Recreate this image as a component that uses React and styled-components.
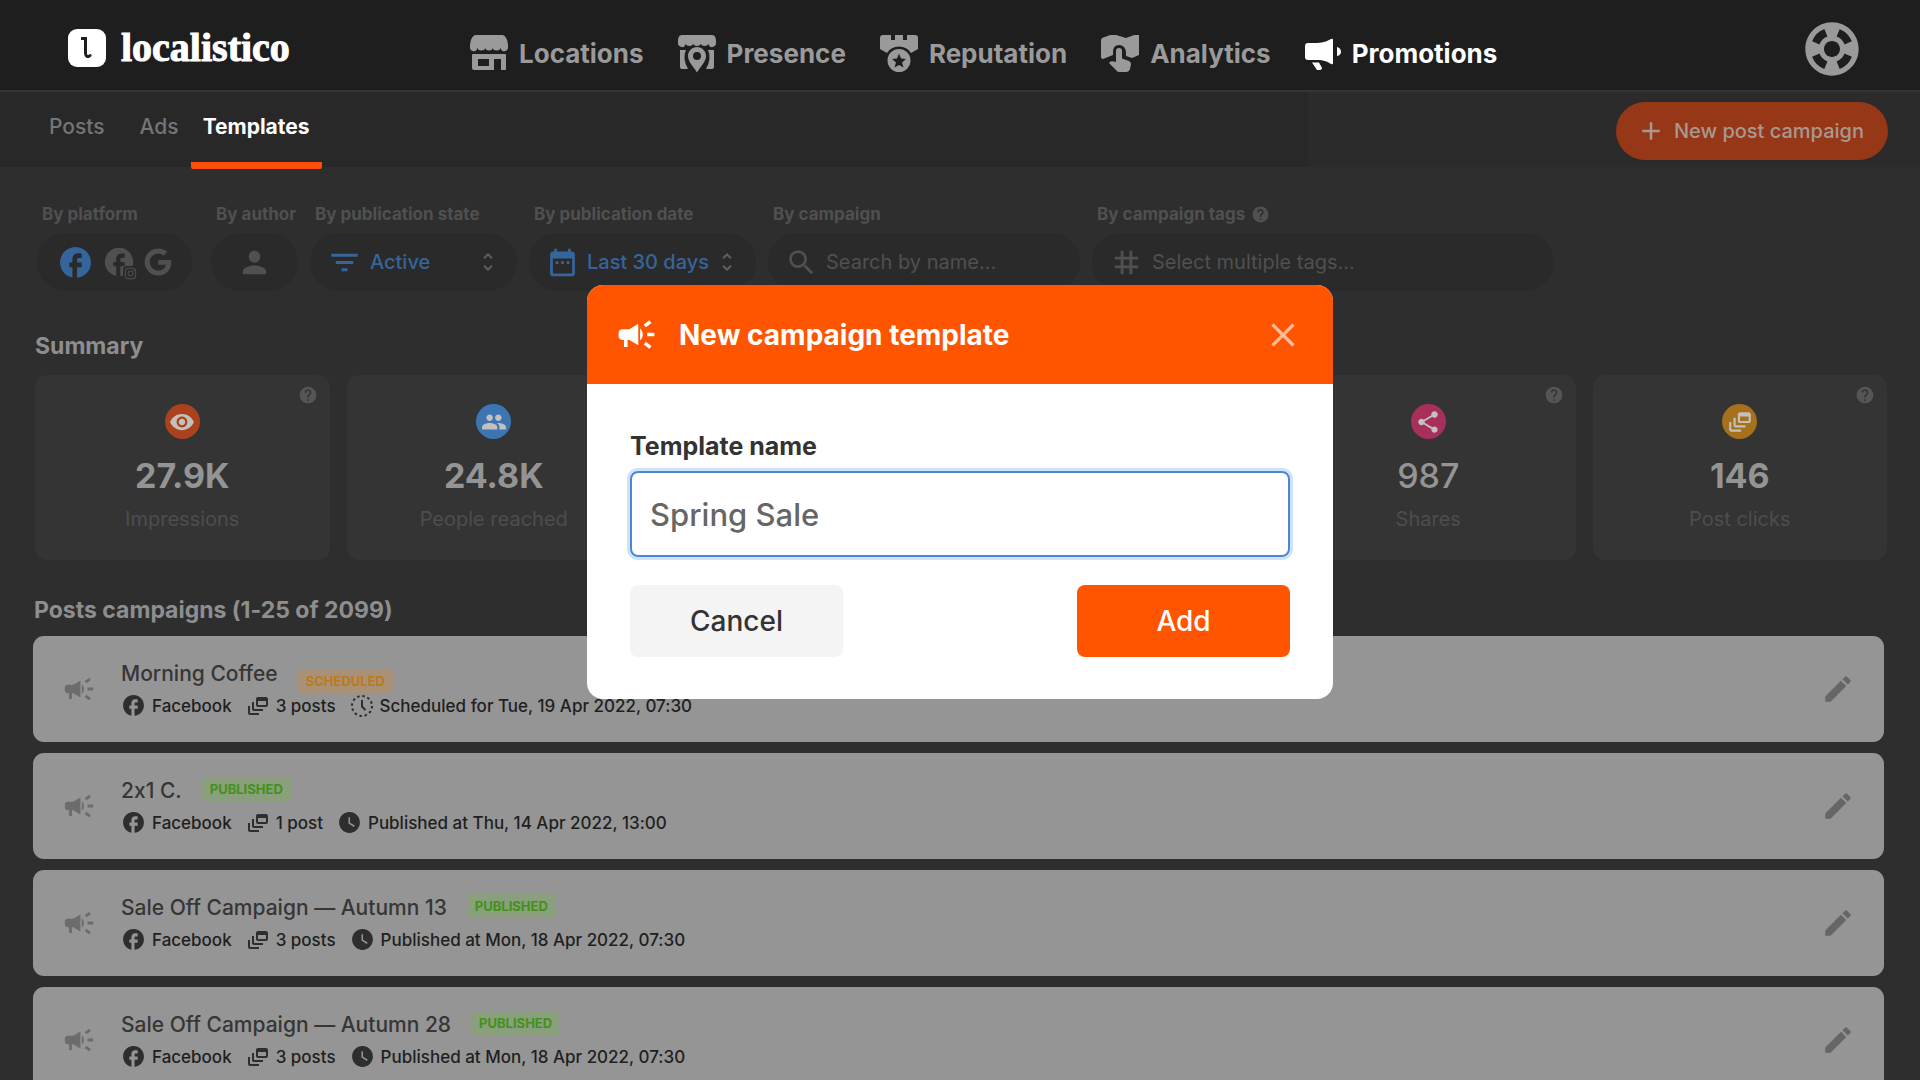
import { useState } from 'react';
import styled, { createGlobalStyle } from 'styled-components';
import {
	MdAdd,
	MdCampaign,
	MdClose,
	MdDateRange,
	MdDynamicFeed,
	MdEdit,
	MdFacebook,
	MdFilterList,
	MdGroup,
	MdHelp,
	MdPerson,
	MdRemoveRedEye,
	MdSearch,
	MdShare,
	MdSupport,
	MdTag,
	MdUnfoldMore,
	MdWatchLater,
} from 'react-icons/md';
import { FaGoogle, FaInstagram } from 'react-icons/fa';

const GlobalStyle = createGlobalStyle`
	* {
		box-sizing: border-box;
	}
	body {
		margin: 0;
		background: #2e2e2e;
		font-family: Inter, 'Liberation Sans', sans-serif;
		font-variant-ligatures: no-contextual;
	}
	h1, h2, h3, p, ul {
		margin: 0;
		padding: 0;
	}
	ul {
		list-style: none;
	}
	a {
		color: inherit;
		text-decoration: none;
	}
	button, input, select {
		border: 0;
		background: none;
		color: inherit;
		font: inherit;
		padding: 0;
	}
	button {
		cursor: pointer;
	}
	svg {
		display: block;
		flex: none;
	}
`;

const Page = styled.div`
	height: 100vh;
	overflow: hidden;
`;

/* ---------- header ---------- */

const Header = styled.header`
	display: grid;
	grid-template-columns: 470px 1fr auto;
	align-items: center;
	height: 92px;
	padding-right: 56px;
	background: #1e1e1e;
	border-bottom: 2px solid #343434;
`;

const Logo = styled.a`
	display: flex;
	align-items: center;
	gap: 15px;
	padding-left: 68px;
	padding-top: 6px;
	color: #fff;
	font: 700 40px/48px 'Liberation Serif', serif;
	-webkit-text-stroke: 1px #fff;
`;

const LogoMark = styled.span`
	display: grid;
	place-items: center;
	width: 38px;
	height: 38px;
	border-radius: 9px;
	background: #fff;
`;

const Nav = styled.nav`
	display: flex;
	gap: 34px;
	padding-top: 18px;
`;

const NavLink = styled.a`
	display: flex;
	align-items: center;
	gap: 11px;
	color: ${({ $active }) => ($active ? '#fff' : '#9a9a9a')};
	font-size: 26px;
	line-height: 32px;
	font-weight: 700;
`;

const HelpButton = styled.button`
	padding-top: 8px;
	color: #9a9a9a;
`;

/* ---------- tabs ---------- */

const SubHeader = styled.div`
	display: flex;
	justify-content: space-between;
	height: 75px;
	padding: 0 32px 0 26px;
	background: linear-gradient(90deg, #282828 1308px, #2b2b2b 1308px);
`;

const Tabs = styled.nav`
	display: flex;
`;

const Tab = styled.a`
	height: 77px;
	padding: 22px 12px 0 ${({ $active }) => ($active ? 12 : 23)}px;
	border-bottom: 7px solid ${({ $active }) => ($active ? '#ff4d0a' : 'transparent')};
	border-radius: 2px;
	color: ${({ $active }) => ($active ? '#fff' : '#757575')};
	font-size: 21px;
	line-height: 26px;
	font-weight: ${({ $active }) => ($active ? 700 : 500)};
`;

const NewPostButton = styled.button`
	display: flex;
	align-items: center;
	gap: 8px;
	height: 58px;
	margin-top: 10px;
	padding: 0 24px 0 20px;
	border-radius: 29px;
	background: #963718;
	color: #a9988f;
	font-size: 20px;
	font-weight: 500;
`;

/* ---------- filters ---------- */

const Filters = styled.form`
	display: flex;
	gap: 12px;
	padding: 36px 37px 0;
`;

const Field = styled.div`
	width: ${({ $width }) => $width}px;
`;

const FieldLabel = styled.label`
	display: flex;
	align-items: center;
	gap: 6px;
	height: 22px;
	margin-bottom: 8px;
	padding-left: 5px;
	color: #505050;
	font-size: 17px;
	line-height: 22px;
	font-weight: 700;
	white-space: nowrap;
`;

const Pill = styled.div`
	display: flex;
	align-items: center;
	justify-content: ${({ $center }) => ($center ? 'center' : 'flex-start')};
	gap: 8px;
	width: ${({ $fit }) => ($fit ? 'fit-content' : '100%')};
	height: 58px;
	padding: 0 ${({ $fit }) => ($fit ? 20 : 17)}px;
	border-radius: 29px;
	background: #2a2a2a;
	color: ${({ $active }) => ($active ? '#35659b' : '#505050')};
	font-size: 20px;
	font-weight: 500;

	select, input {
		flex: 1;
		min-width: 0;
		height: 30px;
		appearance: none;
		outline: none;
		font-weight: 500;
	}
	select {
		margin-right: -8px;
	}
	input {
		font-weight: 400;
	}
	input::placeholder {
		color: #505050;
		opacity: 1;
	}
`;

const PlatformButton = styled.button`
	position: relative;
	color: ${({ $active }) => ($active ? '#35659b' : '#505050')};
`;

const SmallBadge = styled.span`
	position: absolute;
	right: -2px;
	bottom: -2px;
	padding: 1px;
	border-radius: 4px;
	background: #2a2a2a;
`;

const Arrows = styled(MdUnfoldMore)`
	color: #606060;
	pointer-events: none;
`;

/* ---------- summary ---------- */

const SectionTitle = styled.h2`
	color: #8e8e8e;
	font-size: 23px;
	line-height: 30px;
	font-weight: 700;
`;

const Summary = styled.section`
	padding: 40px 33px 0 35px;
`;

const Cards = styled.div`
	display: grid;
	grid-template-columns: repeat(6, 1fr);
	gap: 17px;
	margin-top: 14px;
`;

const Card = styled.article`
	position: relative;
	grid-column: ${({ $column }) => $column};
	display: flex;
	flex-direction: column;
	align-items: center;
	height: 185px;
	padding-top: 29px;
	border-radius: 12px;
	background: #343434;
`;

const CardIcon = styled.span`
	display: grid;
	place-items: center;
	width: 35px;
	height: 35px;
	border-radius: 50%;
	background: ${({ $color }) => $color};
	color: #c4c0be;
`;

const CardHelp = styled.button`
	position: absolute;
	top: 10px;
	right: 12px;
	color: #555;
`;

const CardValue = styled.strong`
	margin-top: 15px;
	color: #949494;
	font-size: 34px;
	line-height: 44px;
	font-weight: ${({ $light }) => ($light ? 500 : 700)};
`;

const CardLabel = styled.span`
	margin-top: 8px;
	color: #4d4d4d;
	font-size: 20px;
	line-height: 26px;
`;

/* ---------- campaigns ---------- */

const Campaigns = styled.section`
	padding: 35px 36px 0 33px;

	${SectionTitle} {
		padding-left: 1px;
	}
`;

const CampaignList = styled.ul`
	display: flex;
	flex-direction: column;
	gap: 11px;
	margin-top: 11px;
`;

const CampaignRow = styled.li`
	display: flex;
	align-items: center;
	height: 106px;
	padding: 0 29px;
	border-radius: 11px;
	background: #959595;
	color: #6c6c6c;
`;

const CampaignBody = styled.div`
	flex: 1;
	padding-left: 25px;
`;

const CampaignHead = styled.div`
	display: flex;
	align-items: ${({ $low }) => ($low ? 'flex-end' : 'flex-start')};
	gap: 20px;
	height: 33px;
`;

const CampaignTitle = styled.h3`
	align-self: flex-start;
	color: #363636;
	font-size: 21px;
	line-height: 28px;
	font-weight: 500;
`;

const Status = styled.span`
	padding: 0 8px;
	border-radius: 4px;
	background: ${({ $scheduled }) => ($scheduled ? '#a99178' : '#8a9f7b')};
	color: ${({ $scheduled }) => ($scheduled ? '#bd7a1c' : '#43911d')};
	font-size: 13px;
	line-height: 24px;
	font-weight: 700;
`;

const Meta = styled.div`
	display: flex;
	gap: 14px;
	color: #1f1f1f;
	font-size: 17px;
	line-height: 24px;
	font-weight: 500;
`;

const MetaItem = styled.span`
	display: flex;
	align-items: center;
	gap: 6px;

	svg {
		color: #2e2e2e;
	}
`;

/* ---------- modal ---------- */

const Overlay = styled.div`
	position: fixed;
	inset: 0;
	display: flex;
	justify-content: center;
	align-items: flex-start;
	padding-top: 285px;
`;

const Modal = styled.form`
	width: 746px;
	border-radius: 16px;
	overflow: hidden;
	background: #fff;
`;

const ModalHeader = styled.div`
	display: flex;
	align-items: center;
	height: 99px;
	padding: 0 30px 0 28px;
	background: #f50;
	color: #fff;
`;

const ModalTitle = styled.h1`
	flex: 1;
	padding-left: 21px;
	font-size: 28px;
	line-height: 36px;
	font-weight: 700;
`;

const CloseButton = styled.button`
	color: #ffbb99;
`;

const ModalBody = styled.div`
	padding: 47px 43px 42px;
`;

const ModalLabel = styled.label`
	display: block;
	margin-bottom: 10px;
	color: #333;
	font-size: 25px;
	line-height: 30px;
	font-weight: 700;
`;

const ModalInput = styled.input`
	width: 100%;
	height: 86px;
	padding: 0 18px;
	border: 2px solid #4a86d6;
	border-radius: 8px;
	outline: none;
	box-shadow: 0 0 0 3px #cfe2f8;
	color: #666;
	font-size: 31px;
	font-weight: 500;
`;

const ModalActions = styled.div`
	display: flex;
	justify-content: space-between;
	margin-top: 28px;
`;

const ModalButton = styled.button`
	width: 213px;
	height: 72px;
	border-radius: 8px;
	background: ${({ $primary }) => ($primary ? '#f50' : '#f4f4f4')};
	color: ${({ $primary }) => ($primary ? '#fff' : '#333')};
	font-size: 28px;
	font-weight: 500;
`;

/* ---------- icons ---------- */

const LogoGlyph = () => (
	<svg width="12" height="24" viewBox="0 0 12 24" fill="none" stroke="#1e1e1e" strokeWidth="3">
		<path d="M1 2.5H4.5V17C4.5 20.5 7 21.5 9 19.5" strokeLinecap="round" />
	</svg>
);

const StoreIcon = () => (
	<svg width="38" height="38" viewBox="0 0 38 38" fill="currentColor">
		<path d="M6 0H32C36 0 38 6 38 11A3.8 4.5 0 0 1 30.4 12.5A3.8 3 0 0 1 22.8 12.5A3.8 3 0 0 1 15.2 12.5A3.8 3 0 0 1 7.6 12.5A3.8 4.5 0 0 1 0 11C0 6 2 0 6 0Z" />
		<path
			fillRule="evenodd"
			d="M3 19H35Q36 19 36 20V34Q36 35 35 35H31V24H24V35H4Q2 35 2 33V20Q2 19 3 19ZM8 24V31H19V24Z"
		/>
	</svg>
);

const PinStoreIcon = () => (
	<svg width="38" height="38" viewBox="0 0 38 38" fill="currentColor">
		<path d="M4 0H34C37 0 38 3 38 6A4 5 0 0 1 30.4 9A4 3 0 0 1 22.8 9A4 3 0 0 1 15.2 9A4 3 0 0 1 7.6 9A4 5 0 0 1 0 6C0 3 1 0 4 0Z" />
		<path
			fillRule="evenodd"
			d="M19 12C24 12 28 16 28 21C28 27 22 32 19 37.5C16 32 10 27 10 21C10 16 14 12 19 12ZM19 17A4 4 0 1 0 19 25A4 4 0 1 0 19 17Z"
		/>
		<path d="M2 15H8Q4 23 10 34H4Q2 34 2 32ZM36 15H30Q34 23 28 34H34Q36 34 36 32Z" />
	</svg>
);

const MedalIcon = () => (
	<svg width="38" height="38" viewBox="0 0 38 38" fill="currentColor">
		<path d="M3 0H11V5H15V0H23V5H27V0H35Q38 0 38 3V14L31 18Q27 11.5 19 11.5Q11 11.5 7 18L0 14V3Q0 0 3 0Z" />
		<path
			fillRule="evenodd"
			d="M19 14A11.5 11.5 0 1 1 19 37A11.5 11.5 0 1 1 19 14ZM19 18.5L17 23.5L12 24L16 27.5L14.5 32.5L19 30L23.5 32.5L22 27.5L26 24L21 23.5Z"
		/>
	</svg>
);

const MapIcon = () => (
	<svg width="38" height="38" viewBox="0 0 38 38" fill="currentColor">
		<path d="M1 3L12 -1L25 3L36 -1Q38 -1 38 1V20L31 23L25 21V17Q24 10 18 10Q12 10 12 17V20L2 24Q0 24 0 22V5Z" />
		<path d="M15 16Q15 13 18 13Q21 13 21 16V23.5L28 26Q30 27 30 29L29 34Q28 37 25 37H18Q16 37 15 35L8 28Q9 25 15 27Z" />
	</svg>
);

const HornIcon = () => (
	<svg width="36" height="38" viewBox="0 0 36 38" fill="currentColor">
		<path d="M3 8H12C19 8 24 5 26 4Q28 3 28 5V28Q28 30 26 29C23 27 19 25 12 25H3Q0 25 0 22V11Q0 8 3 8Z" />
		<path d="M7 27.5H14L17 33Q17 35 14 35H12Z" />
		<path d="M32 12Q36 13 36 17Q36 20 32 21Z" />
	</svg>
);

const ScheduledIcon = () => (
	<svg width="24" height="24" viewBox="0 0 24 24" fill="none" stroke="currentColor" strokeWidth="2">
		<circle cx="12" cy="12" r="10" strokeDasharray="2.5 2.735" />
		<path d="M12 6V12.5L15.5 16" />
	</svg>
);

const NAV = [
	{ label: 'Locations', Icon: StoreIcon },
	{ label: 'Presence', Icon: PinStoreIcon },
	{ label: 'Reputation', Icon: MedalIcon },
	{ label: 'Analytics', Icon: MapIcon },
	{ label: 'Promotions', Icon: HornIcon, active: true },
];

const TABS = ['Posts', 'Ads', 'Templates'];

const CARDS = [
	{ column: 1, value: '27.9K', label: 'Impressions', color: '#ab421d', Icon: MdRemoveRedEye },
	{ column: 2, value: '24.8K', label: 'People reached', color: '#3d75b3', Icon: MdGroup },
	{ column: 5, value: '987', label: 'Shares', color: '#a62f5b', Icon: MdShare, light: true },
	{ column: 6, value: '146', label: 'Post clicks', color: '#a6701c', Icon: MdDynamicFeed },
];

const CAMPAIGNS = [
	{
		id: 1,
		title: 'Morning Coffee',
		posts: '3 posts',
		date: 'Scheduled for Tue, 19 Apr 2022, 07:30',
		scheduled: true,
	},
	{ id: 2, title: '2x1 C.', posts: '1 post', date: 'Published at Thu, 14 Apr 2022, 13:00' },
	{
		id: 3,
		title: 'Sale Off Campaign — Autumn 13',
		posts: '3 posts',
		date: 'Published at Mon, 18 Apr 2022, 07:30',
	},
	{
		id: 4,
		title: 'Sale Off Campaign — Autumn 28',
		posts: '3 posts',
		date: 'Published at Mon, 18 Apr 2022, 07:30',
	},
];

const TopBar = () => (
	<Header>
		<Logo href="#">
			<LogoMark>
				<LogoGlyph />
			</LogoMark>
			localistico
		</Logo>
		<Nav>
			{NAV.map(({ label, Icon, active }) => (
				<NavLink key={label} href="#" $active={active}>
					<Icon />
					{label}
				</NavLink>
			))}
		</Nav>
		<HelpButton aria-label="Help">
			<MdSupport size={64} />
		</HelpButton>
	</Header>
);

const FilterBar = () => (
	<Filters>
		<Field $width={162}>
			<FieldLabel as="span" id="platform-label">
				By platform
			</FieldLabel>
			<Pill role="group" aria-labelledby="platform-label" $fit>
				<PlatformButton type="button" aria-label="Facebook" $active>
					<MdFacebook size={37} />
				</PlatformButton>
				<PlatformButton type="button" aria-label="Instagram">
					<MdFacebook size={34} />
					<SmallBadge>
						<FaInstagram size={13} />
					</SmallBadge>
				</PlatformButton>
				<PlatformButton type="button" aria-label="Google">
					<FaGoogle size={28} />
				</PlatformButton>
			</Pill>
		</Field>
		<Field $width={87}>
			<FieldLabel as="span" id="author-label">
				By author
			</FieldLabel>
			<Pill as="button" type="button" aria-labelledby="author-label" $center>
				<MdPerson size={35} />
			</Pill>
		</Field>
		<Field $width={207}>
			<FieldLabel htmlFor="state">By publication state</FieldLabel>
			<Pill $active>
				<MdFilterList size={35} />
				<select id="state">
					<option>Active</option>
				</select>
				<Arrows size={24} />
			</Pill>
		</Field>
		<Field $width={227}>
			<FieldLabel htmlFor="date">By publication date</FieldLabel>
			<Pill $active>
				<MdDateRange size={33} />
				<select id="date">
					<option>Last 30 days</option>
				</select>
				<Arrows size={24} />
			</Pill>
		</Field>
		<Field $width={312}>
			<FieldLabel htmlFor="campaign">By campaign</FieldLabel>
			<Pill>
				<MdSearch size={33} />
				<input id="campaign" type="text" placeholder="Search by name..." />
			</Pill>
		</Field>
		<Field $width={462}>
			<FieldLabel htmlFor="tags">
				By campaign tags <MdHelp size={19} />
			</FieldLabel>
			<Pill>
				<MdTag size={35} />
				<input id="tags" type="text" placeholder="Select multiple tags..." />
			</Pill>
		</Field>
	</Filters>
);

const Campaign = ({ title, posts, date, scheduled }) => (
	<CampaignRow>
		<MdCampaign size={34} />
		<CampaignBody>
			<CampaignHead $low={scheduled}>
				<CampaignTitle>{title}</CampaignTitle>
				<Status $scheduled={scheduled}>{scheduled ? 'SCHEDULED' : 'PUBLISHED'}</Status>
			</CampaignHead>
			<Meta>
				<MetaItem>
					<MdFacebook size={25} />
					Facebook
				</MetaItem>
				<MetaItem>
					<MdDynamicFeed size={24} />
					{posts}
				</MetaItem>
				<MetaItem>
					{scheduled ? <ScheduledIcon /> : <MdWatchLater size={25} />}
					{date}
				</MetaItem>
			</Meta>
		</CampaignBody>
		<button aria-label={`Edit ${title}`}>
			<MdEdit size={34} color="#666" />
		</button>
	</CampaignRow>
);

const TemplateModal = ({ onClose }) => {
	const [name, setName] = useState('Spring Sale');

	const onSubmit = (event) => {
		event.preventDefault();
		onClose();
	};

	return (
		<Overlay>
			<Modal role="dialog" aria-labelledby="modal-title" onSubmit={onSubmit}>
				<ModalHeader>
					<MdCampaign size={43} />
					<ModalTitle id="modal-title">New campaign template</ModalTitle>
					<CloseButton type="button" aria-label="Close" onClick={onClose}>
						<MdClose size={40} />
					</CloseButton>
				</ModalHeader>
				<ModalBody>
					<ModalLabel htmlFor="template-name">Template name</ModalLabel>
					<ModalInput
						id="template-name"
						type="text"
						value={name}
						onChange={({ target }) => setName(target.value)}
					/>
					<ModalActions>
						<ModalButton type="button" onClick={onClose}>
							Cancel
						</ModalButton>
						<ModalButton type="submit" $primary>
							Add
						</ModalButton>
					</ModalActions>
				</ModalBody>
			</Modal>
		</Overlay>
	);
};

const App = () => {
	const [isModalOpen, setIsModalOpen] = useState(true);

	return (
		<Page>
			<GlobalStyle />
			<TopBar />
			<SubHeader>
				<Tabs>
					{TABS.map((tab) => (
						<Tab key={tab} href="#" $active={tab === 'Templates'}>
							{tab}
						</Tab>
					))}
				</Tabs>
				<NewPostButton onClick={() => setIsModalOpen(true)}>
					<MdAdd size={30} />
					New post campaign
				</NewPostButton>
			</SubHeader>
			<FilterBar />
			<Summary>
				<SectionTitle>Summary</SectionTitle>
				<Cards>
					{CARDS.map(({ column, value, label, color, Icon, light }) => (
						<Card key={label} $column={column}>
							<CardHelp aria-label={`About ${label}`}>
								<MdHelp size={20} />
							</CardHelp>
							<CardIcon $color={color}>
								<Icon size={26} />
							</CardIcon>
							<CardValue $light={light}>{value}</CardValue>
							<CardLabel>{label}</CardLabel>
						</Card>
					))}
				</Cards>
			</Summary>
			<Campaigns>
				<SectionTitle>Posts campaigns (1-25 of 2099)</SectionTitle>
				<CampaignList>
					{CAMPAIGNS.map((campaign) => (
						<Campaign key={campaign.id} {...campaign} />
					))}
				</CampaignList>
			</Campaigns>
			{isModalOpen && <TemplateModal onClose={() => setIsModalOpen(false)} />}
		</Page>
	);
};

export default App;
